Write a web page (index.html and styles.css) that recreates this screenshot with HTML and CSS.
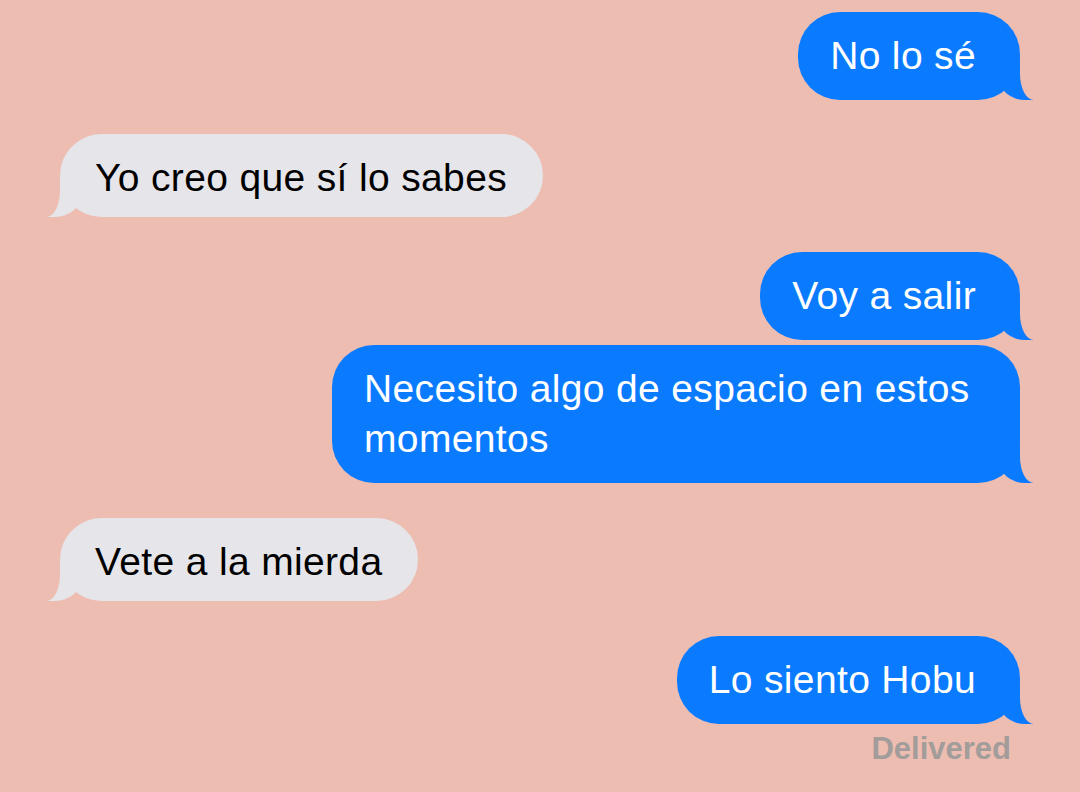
FILE: index.html
```html
<!DOCTYPE html>
<html lang="es">
<head>
<meta charset="utf-8">
<title>Mensajes</title>
<link rel="stylesheet" href="styles.css">
</head>
<body>
<main class="thread">
  <div class="msg sent">No lo sé</div>
  <div class="msg recv group tight">Yo creo que sí lo sabes</div>
  <div class="msg sent group">Voy a salir</div>
  <div class="msg sent next">Necesito algo de espacio en estos momentos</div>
  <div class="msg recv group">Vete a la mierda</div>
  <div class="msg sent group">Lo siento Hobu</div>
  <div class="status">Delivered</div>
</main>
</body>
</html>
```

FILE: styles.css
```css
html, body {
  margin: 0;
  padding: 0;
}

body {
  background: #eebdb1;
  width: 1080px;
  height: 792px;
  overflow: hidden;
  font-family: "Liberation Sans", Arial, sans-serif;
}

.thread {
  display: flex;
  flex-direction: column;
  padding: 12px 60px 0 60px;
}

.msg {
  position: relative;
  box-sizing: border-box;
  max-width: 688px;
  font-size: 39px;
  line-height: 50px;
  letter-spacing: 0.35px;
  border-radius: 42px;
}

.msg::before,
.msg::after {
  content: "";
  position: absolute;
  bottom: 0;
  height: 40px;
}

.sent {
  align-self: flex-end;
  background: #0a7bff;
  color: #ffffff;
  padding: 19px 44px 19px 32px;
}

.sent::before {
  right: -13px;
  width: 34px;
  background: #0a7bff;
  border-bottom-left-radius: 26px 22px;
}

.sent::after {
  right: -50px;
  width: 50px;
  background: #eebdb1;
  border-bottom-left-radius: 14px 26px;
}

.recv {
  align-self: flex-start;
  background: #e5e5ea;
  color: #000000;
  padding: 19px 36px 14px 35px;
}

.recv::before {
  left: -13px;
  width: 34px;
  background: #e5e5ea;
  border-bottom-right-radius: 26px 22px;
}

.recv::after {
  left: -50px;
  width: 50px;
  background: #eebdb1;
  border-bottom-right-radius: 14px 26px;
}

.group {
  margin-top: 35px;
}

.tight {
  margin-top: 34px;
}

.next {
  margin-top: 5px;
}

.status {
  align-self: flex-end;
  margin-top: 8px;
  margin-right: 9px;
  font-size: 31px;
  line-height: 34px;
  font-weight: bold;
  color: #a29c9b;
}
```
